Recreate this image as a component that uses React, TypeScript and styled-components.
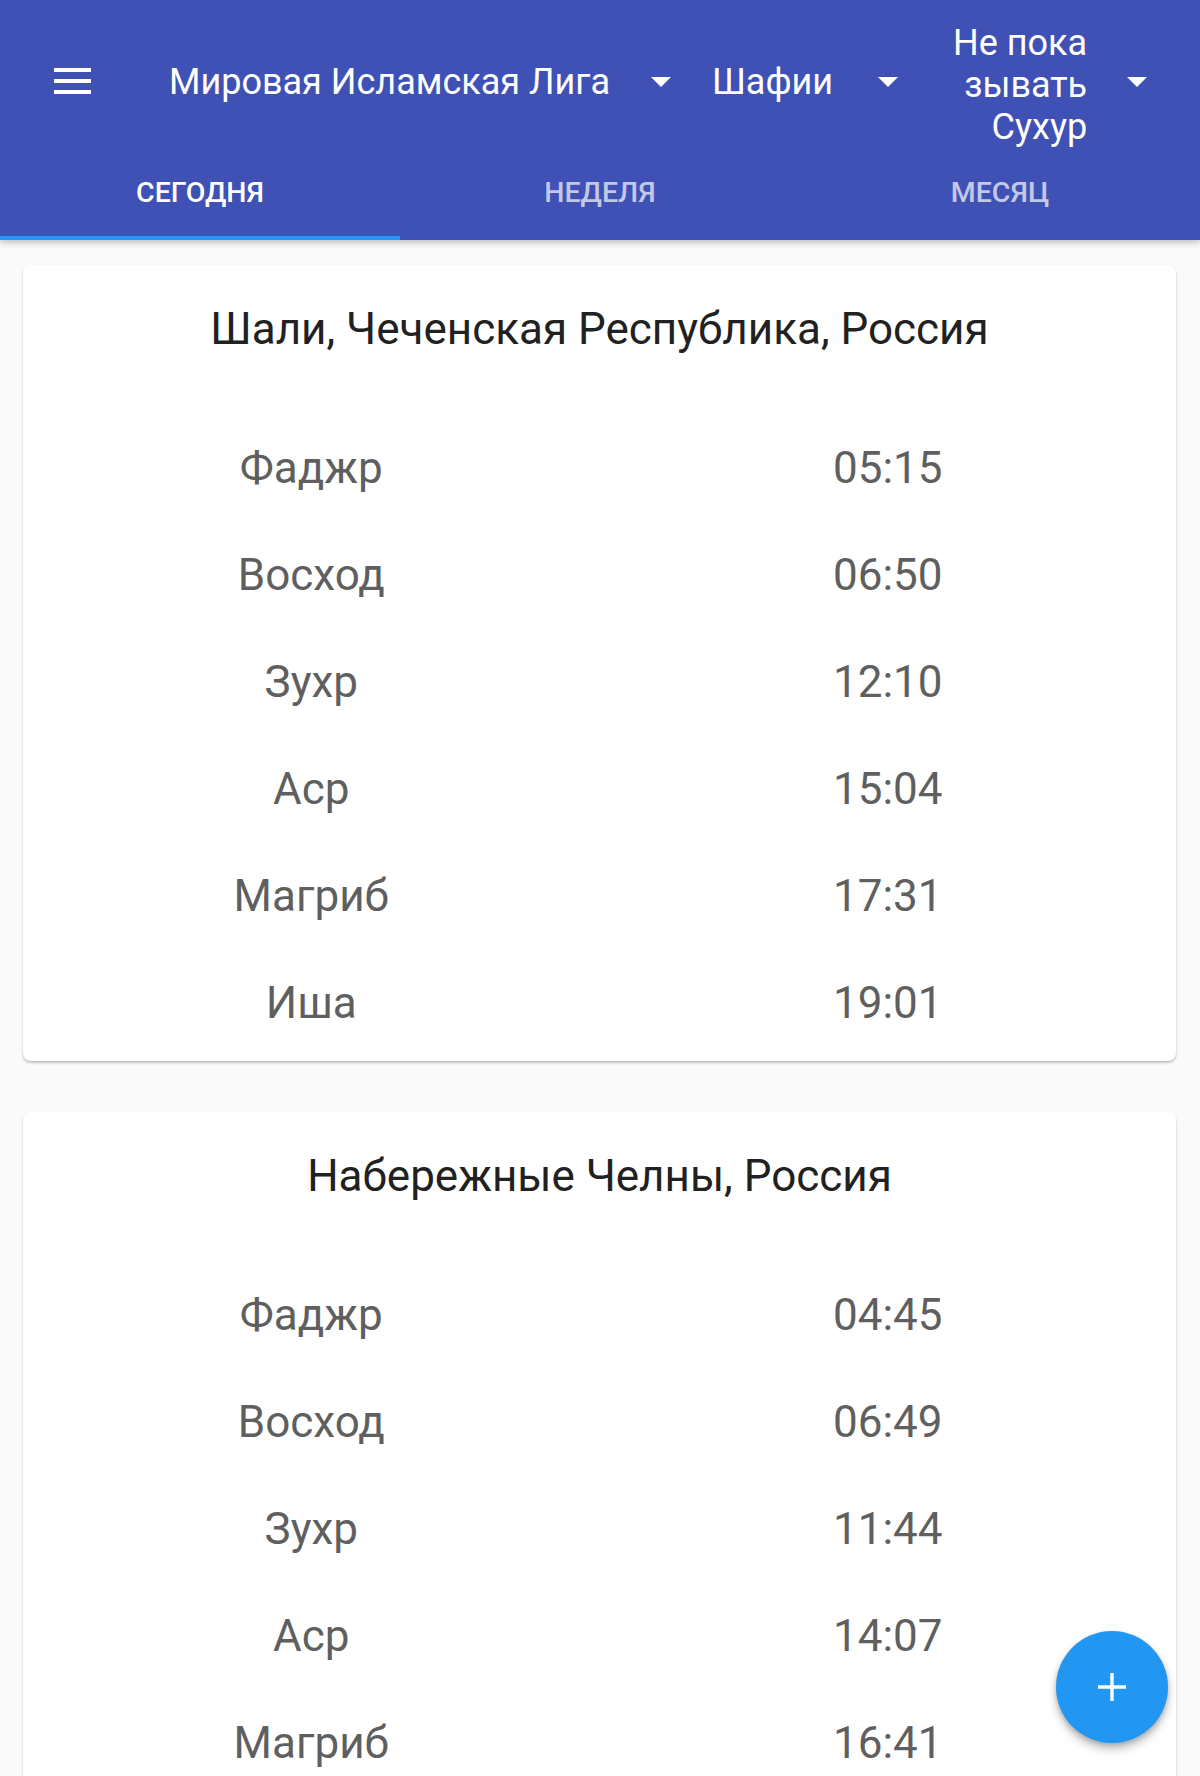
import React from "react";
import styled, { createGlobalStyle } from "styled-components";

const GlobalStyle = createGlobalStyle`
  html, body {
    margin: 0;
    padding: 0;
    background: #fafafa;
    font-family: Roboto, "Noto Sans", sans-serif;
  }
  body {
    width: 1200px;
    height: 1776px;
    overflow: hidden;
  }
`;

const Page = styled.div`
  position: relative;
  width: 1200px;
  height: 1776px;
  overflow: hidden;
  background: #fafafa;
`;

const AppBar = styled.header`
  position: relative;
  z-index: 2;
  background: #3f51b5;
  color: #fff;
  box-shadow: 0 3px 6px rgba(0, 0, 0, 0.22);
`;

const Toolbar = styled.div`
  display: flex;
  align-items: center;
  height: 125px;
  padding: 19px 55px 0 54px;
`;

const MenuButton = styled.div`
  flex-shrink: 0;
  display: flex;
  flex-direction: column;
  justify-content: space-between;
  width: 37px;
  height: 26px;
  margin: -2px 78px 0 0;

  span {
    display: block;
    height: 4px;
    background: #fff;
  }
`;

const Spinner = styled.div<{ $gap: number; $space?: number }>`
  flex-shrink: 0;
  display: flex;
  align-items: center;
  gap: ${(p) => p.$gap}px;
  margin-right: ${(p) => p.$space ?? 0}px;
`;

const SpinnerText = styled.div<{ $multi?: boolean }>`
  font-size: 36px;
  line-height: 42px;
  white-space: pre;
  text-align: right;
  margin-top: ${(p) => (p.$multi ? "6px" : "0")};
`;

const Caret = styled.div`
  flex-shrink: 0;
  width: 0;
  height: 0;
  border-left: 10px solid transparent;
  border-right: 10px solid transparent;
  border-top: 10px solid #fff;
`;

const Tabs = styled.nav`
  display: grid;
  grid-template-columns: repeat(3, 1fr);
  height: 96px;
`;

const Tab = styled.div<{ $active?: boolean }>`
  position: relative;
  display: flex;
  align-items: center;
  justify-content: center;
  font-size: 28.5px;
  font-weight: 500;
  color: ${(p) => (p.$active ? "#fff" : "rgba(255, 255, 255, 0.7)")};
  text-transform: uppercase;

  &::after {
    content: "";
    position: absolute;
    left: 0;
    right: 0;
    bottom: 0;
    height: 4px;
    background: ${(p) => (p.$active ? "#2196f3" : "transparent")};
  }
`;

const Content = styled.main`
  display: flex;
  flex-direction: column;
  gap: 51px;
  padding: 25px 24px 0 23px;
`;

const Card = styled.section`
  background: #fff;
  border-radius: 8px;
  box-shadow: 0 2px 3px rgba(0, 0, 0, 0.2), 0 1px 1px rgba(0, 0, 0, 0.08);
  padding: 39px 0 5px;
`;

const CardTitle = styled.h2`
  margin: 0 0 60px;
  font-size: 44px;
  line-height: 50px;
  font-weight: 400;
  color: #212121;
  text-align: center;
  white-space: nowrap;
`;

const Row = styled.div`
  display: grid;
  grid-template-columns: 1fr 1fr;
  height: 107px;
  align-items: center;
  text-align: center;
  font-size: 44px;
  color: #5f5f5f;
`;

const Fab = styled.button`
  position: absolute;
  right: 32px;
  bottom: 33px;
  width: 112px;
  height: 112px;
  border: none;
  border-radius: 50%;
  background: #2196f3;
  box-shadow: 0 6px 10px rgba(0, 0, 0, 0.25), 0 2px 4px rgba(0, 0, 0, 0.15);
  display: flex;
  align-items: center;
  justify-content: center;
  padding: 0;
`;

const cities = [
  {
    name: "Шали, Чеченская Республика, Россия",
    times: ["05:15", "06:50", "12:10", "15:04", "17:31", "19:01"],
  },
  {
    name: "Набережные Челны, Россия",
    times: ["04:45", "06:49", "11:44", "14:07", "16:41", "18:15"],
  },
];

const prayers = ["Фаджр", "Восход", "Зухр", "Аср", "Магриб", "Иша"];

export default function App() {
  return (
    <Page>
      <GlobalStyle />
      <AppBar>
        <Toolbar>
          <MenuButton>
            <span />
            <span />
            <span />
          </MenuButton>
          <Spinner $gap={41} $space={41}>
            <SpinnerText>Мировая Исламская Лига</SpinnerText>
            <Caret />
          </Spinner>
          <Spinner $gap={45} $space={55}>
            <SpinnerText>Шафии</SpinnerText>
            <Caret />
          </Spinner>
          <Spinner $gap={40}>
            <SpinnerText $multi>{"Не пока\nзывать\nСухур"}</SpinnerText>
            <Caret />
          </Spinner>
        </Toolbar>
        <Tabs>
          <Tab $active>Сегодня</Tab>
          <Tab>Неделя</Tab>
          <Tab>Месяц</Tab>
        </Tabs>
      </AppBar>
      <Content>
        {cities.map((c) => (
          <Card key={c.name}>
            <CardTitle>{c.name}</CardTitle>
            {prayers.map((p, i) => (
              <Row key={p}>
                <span>{p}</span>
                <span>{c.times[i]}</span>
              </Row>
            ))}
          </Card>
        ))}
      </Content>
      <Fab aria-label="add">
        <svg width="30" height="30" viewBox="0 0 30 30">
          <path d="M15 1v28M1 15h28" stroke="#fff" strokeWidth="3.4" />
        </svg>
      </Fab>
    </Page>
  );
}
